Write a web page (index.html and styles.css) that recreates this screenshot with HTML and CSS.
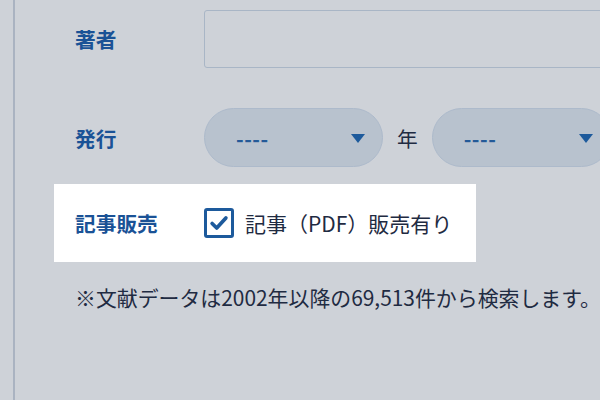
FILE: index.html
```html
<!DOCTYPE html>
<html lang="ja">
<head>
    <meta charset="UTF-8">
    <meta name="viewport" content="width=device-width, initial-scale=1.0">
    <title>文献検索</title>
    <link rel="stylesheet" href="styles.css">
</head>
<body>
    <div class="panel">
        <form class="search-form">
            <div class="form-row">
                <label class="row-label" for="author">著者</label>
                <input type="text" id="author" class="text-input">
            </div>

            <div class="form-row">
                <span class="row-label">発行</span>
                <div class="select-box">
                    <span class="select-value">----</span>
                    <span class="select-arrow"></span>
                </div>
                <span class="unit">年</span>
                <div class="select-box">
                    <span class="select-value">----</span>
                    <span class="select-arrow"></span>
                </div>
            </div>

            <div class="form-row highlight">
                <span class="row-label">記事販売</span>
                <label class="check-item">
                    <span class="check-box">
                        <svg viewBox="0 0 24 24" width="22" height="22">
                            <path d="M4.5 12.5 L9.5 17.5 L19.5 6.5" fill="none" stroke="#1d5a9c" stroke-width="4" stroke-linecap="round" stroke-linejoin="round"/>
                        </svg>
                    </span>
                    記事（PDF）販売有り
                </label>
            </div>

            <p class="note">※文献データは2002年以降の69,513件から検索します。</p>
        </form>
    </div>
</body>
</html>
```

FILE: styles.css
```css
* { margin: 0; padding: 0; box-sizing: border-box; }
html, body { width: 100%; height: 100%; }
body {
    background: #ced2d8;
    font-family: "Noto Sans CJK JP", "Noto Sans", sans-serif;
    color: #1f2b42;
    font-size: 20.7px;
    overflow: hidden;
}
.panel {
    margin-left: 13px;
    min-height: 100vh;
    border-left: 2px solid #aab3c1;
    padding-left: 39px;
    padding-top: 10px;
}
.search-form {
    width: 700px;
}
.form-row {
    display: flex;
    align-items: center;
    padding-left: 21px;
}
.form-row + .form-row { margin-top: 40px; }
.form-row.highlight {
    display: inline-flex;
    margin-top: 17px;
    height: 78px;
    padding-right: 24px;
    background: #fff;
}
.row-label {
    width: 129px;
    flex-shrink: 0;
    font-weight: bold;
    color: #1a5296;
}
.text-input {
    width: 460px;
    height: 58px;
    border: 1px solid #a9b6c6;
    border-radius: 3px;
    background: #ced2d8;
    font: inherit;
}
.select-box {
    width: 179px;
    height: 59px;
    border: 1px solid #adbacb;
    border-radius: 30px;
    background: #b8c2ce;
    display: flex;
    align-items: center;
    justify-content: space-between;
    padding: 0 17px 0 31px;
}
.select-value {
    color: #245a98;
    font-weight: bold;
    letter-spacing: 0.5px;
}
.select-arrow {
    width: 0;
    height: 0;
    border-left: 7.5px solid transparent;
    border-right: 7.5px solid transparent;
    border-top: 9px solid #1d5a9c;
    margin-top: 1px;
}
.unit {
    margin: 0 14px;
    color: #1f2b42;
}
.check-item {
    display: flex;
    align-items: center;
    gap: 11px;
    font-size: 21px;
    color: #1f2b42;
}
.check-box {
    width: 30px;
    height: 30px;
    border: 3px solid #1d5a9c;
    border-radius: 3px;
    background: #fff;
    display: flex;
    align-items: center;
    justify-content: center;
}
.note {
    margin-top: 20px;
    padding-left: 21px;
    font-size: 20.9px;
    line-height: 30px;
    color: #1f2b42;
}
```
